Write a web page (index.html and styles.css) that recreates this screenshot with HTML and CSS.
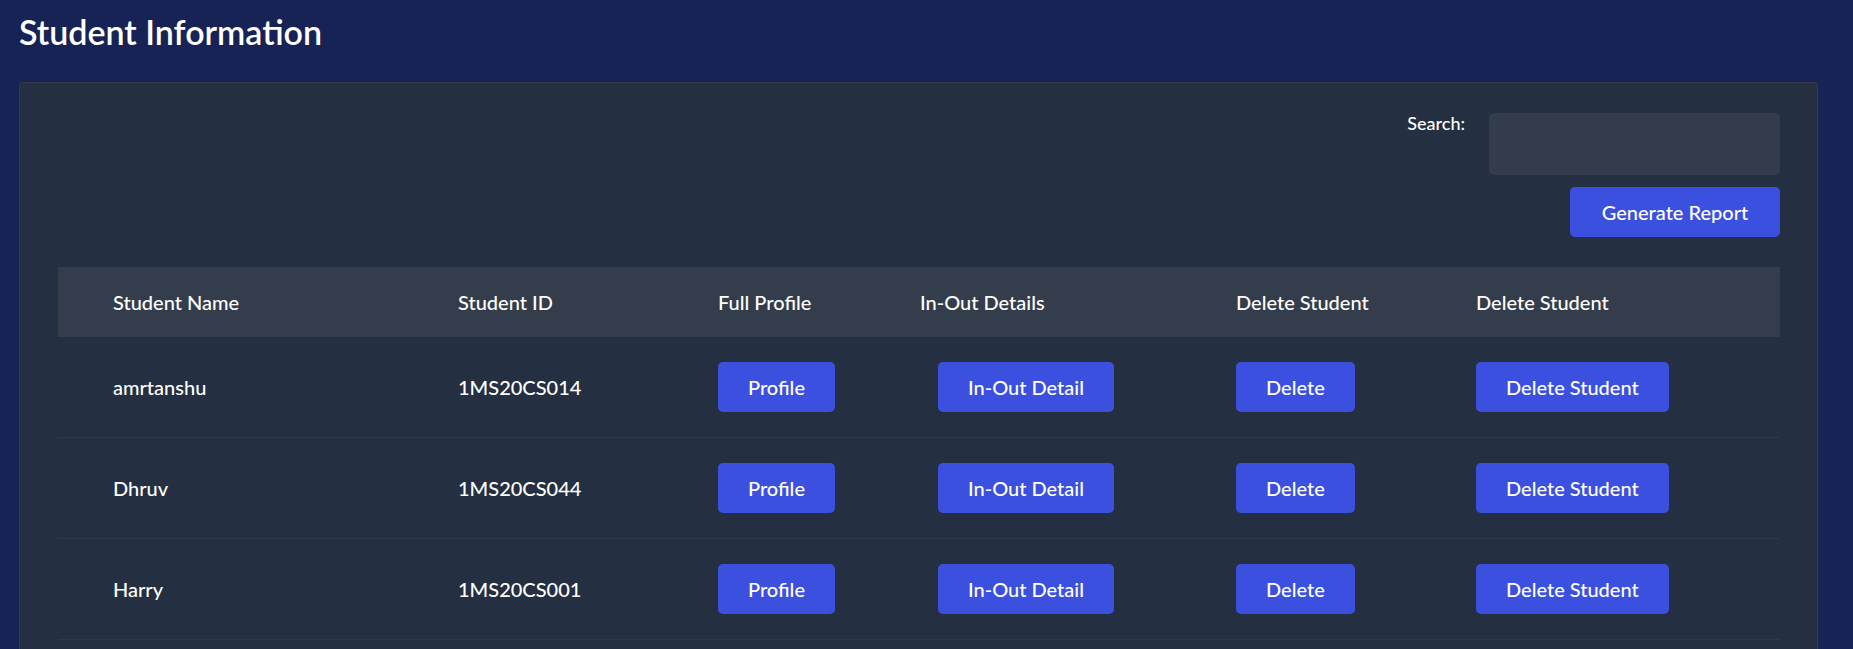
FILE: index.html
```html
<!DOCTYPE html>
<html lang="en">
<head>
<meta charset="utf-8">
<title>Student Information</title>
<link rel="stylesheet" href="styles.css">
</head>
<body>
<h1 class="title">Student Information</h1>
<div class="card">
  <div class="toolbar">
    <div class="search">
      <label class="search-label" for="q">Search:</label>
      <input class="search-input" id="q" type="text">
    </div>
    <button class="btn btn-report">Generate Report</button>
  </div>
  <div class="table">
    <div class="row head">
      <div class="cell first">Student Name</div>
      <div class="cell">Student ID</div>
      <div class="cell">Full Profile</div>
      <div class="cell">In-Out Details</div>
      <div class="cell">Delete Student</div>
      <div class="cell">Delete Student</div>
    </div>
    <div class="row">
      <div class="cell first">amrtanshu</div>
      <div class="cell">1MS20CS014</div>
      <div class="cell"><button class="btn">Profile</button></div>
      <div class="cell"><button class="btn btn-inout">In-Out Detail</button></div>
      <div class="cell"><button class="btn">Delete</button></div>
      <div class="cell"><button class="btn">Delete Student</button></div>
    </div>
    <div class="row">
      <div class="cell first">Dhruv</div>
      <div class="cell">1MS20CS044</div>
      <div class="cell"><button class="btn">Profile</button></div>
      <div class="cell"><button class="btn btn-inout">In-Out Detail</button></div>
      <div class="cell"><button class="btn">Delete</button></div>
      <div class="cell"><button class="btn">Delete Student</button></div>
    </div>
    <div class="row">
      <div class="cell first">Harry</div>
      <div class="cell">1MS20CS001</div>
      <div class="cell"><button class="btn">Profile</button></div>
      <div class="cell"><button class="btn btn-inout">In-Out Detail</button></div>
      <div class="cell"><button class="btn">Delete</button></div>
      <div class="cell"><button class="btn">Delete Student</button></div>
    </div>
  </div>
</div>
</body>
</html>
```

FILE: styles.css
```css
html, body {
  margin: 0;
  padding: 0;
}
body {
  background: #172354;
  color: #ffffff;
  font-family: "Lato", "Liberation Sans", sans-serif;
  padding: 0 35px 0 19px;
  overflow: hidden;
}
.title {
  margin: 12px 0 29px 0;
  font-size: 34px;
  line-height: 1.2;
  font-weight: 600;
}
.card {
  background: #243041;
  border: 1px solid #2f3b4d;
  border-radius: 3px;
  padding: 30px 37px 40px 38px;
}
.toolbar {
  display: flex;
  flex-direction: column;
  align-items: flex-end;
  gap: 12px;
  margin-bottom: 30px;
}
.search {
  display: flex;
  align-items: flex-start;
  gap: 24px;
}
.search-label {
  font-size: 18px;
  line-height: 1.2;
  font-weight: 500;
}
.search-input {
  width: 291px;
  height: 62px;
  box-sizing: border-box;
  background: #323c4b;
  border: none;
  border-radius: 5px;
  color: #fff;
  font-family: inherit;
  font-size: 18px;
  padding: 0 12px;
  outline: none;
}
.btn {
  height: 50px;
  padding: 0 30px;
  border: none;
  border-radius: 5px;
  background: #3c50e0;
  color: #ffffff;
  font-family: inherit;
  font-size: 20px;
  font-weight: 500;
  white-space: nowrap;
  cursor: pointer;
}
.btn-report {
  width: 210px;
  padding: 0;
}
.btn-inout {
  margin-left: 18px;
}
.table {
  display: flex;
  flex-direction: column;
}
.row {
  display: grid;
  grid-template-columns: 400px 260px 202px 316px 240px 1fr;
  align-items: center;
  height: 100px;
  border-bottom: 1px solid #2e3a4b;
  font-size: 20px;
  font-weight: 500;
}
.row.head {
  height: 70px;
  background: #333d4c;
  border-bottom: none;
}
.cell.first {
  padding-left: 55px;
}
```
